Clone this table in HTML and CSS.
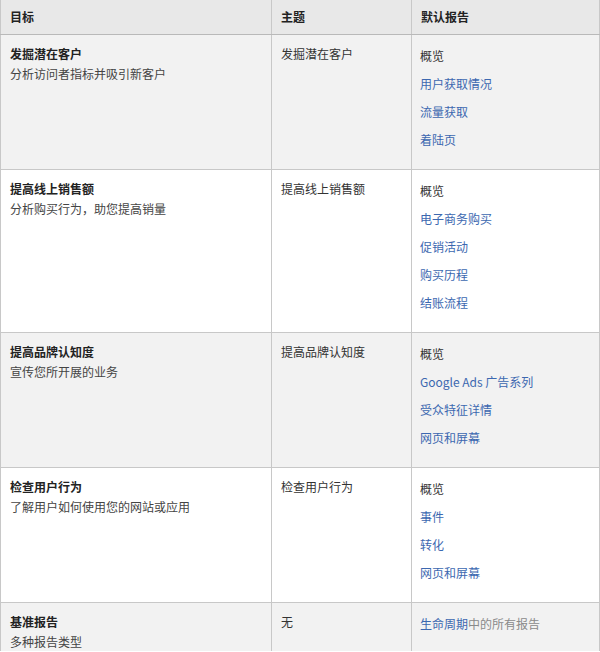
FILE: index.html
```html
<!DOCTYPE html>
<html lang="zh-CN">
<head>
<meta charset="utf-8">
<title>目标与报告</title>
<link rel="stylesheet" href="styles.css">
</head>
<body>
<table class="goals">
  <colgroup>
    <col class="c1">
    <col class="c2">
    <col class="c3">
  </colgroup>
  <thead>
    <tr class="head">
      <th>目标</th>
      <th>主题</th>
      <th>默认报告</th>
    </tr>
  </thead>
  <tbody>
    <tr class="shade">
      <td><div class="title">发掘潜在客户</div><div class="sub">分析访问者指标并吸引新客户</div></td>
      <td class="topic">发掘潜在客户</td>
      <td class="reports">
        <div class="item">概览</div>
        <div class="item link">用户获取情况</div>
        <div class="item link">流量获取</div>
        <div class="item link">着陆页</div>
      </td>
    </tr>
    <tr>
      <td><div class="title">提高线上销售额</div><div class="sub">分析购买行为，助您提高销量</div></td>
      <td class="topic">提高线上销售额</td>
      <td class="reports">
        <div class="item">概览</div>
        <div class="item link">电子商务购买</div>
        <div class="item link">促销活动</div>
        <div class="item link">购买历程</div>
        <div class="item link">结账流程</div>
      </td>
    </tr>
    <tr class="shade">
      <td><div class="title">提高品牌认知度</div><div class="sub">宣传您所开展的业务</div></td>
      <td class="topic">提高品牌认知度</td>
      <td class="reports">
        <div class="item">概览</div>
        <div class="item link">Google Ads 广告系列</div>
        <div class="item link">受众特征详情</div>
        <div class="item link">网页和屏幕</div>
      </td>
    </tr>
    <tr>
      <td><div class="title">检查用户行为</div><div class="sub">了解用户如何使用您的网站或应用</div></td>
      <td class="topic">检查用户行为</td>
      <td class="reports">
        <div class="item">概览</div>
        <div class="item link">事件</div>
        <div class="item link">转化</div>
        <div class="item link">网页和屏幕</div>
      </td>
    </tr>
    <tr class="shade last">
      <td><div class="title">基准报告</div><div class="sub">多种报告类型</div></td>
      <td class="topic">无</td>
      <td class="reports">
        <div class="item"><span class="link">生命周期</span><span class="faded">中的所有报告</span></div>
      </td>
    </tr>
  </tbody>
</table>
</body>
</html>
```

FILE: styles.css
```css
html, body {
  margin: 0;
  padding: 0;
  background: #ffffff;
}

body {
  font-family: "Noto Sans CJK SC", "Noto Sans", "Liberation Sans", sans-serif;
  font-size: 12px;
  color: #333333;
  width: 600px;
  height: 652px;
  overflow: hidden;
}

.goals {
  width: 599px;
  border-collapse: collapse;
  table-layout: fixed;
}

.c1 { width: 271px; }
.c2 { width: 140px; }
.c3 { width: 188px; }

.goals th,
.goals td {
  border: 1px solid #c8c8c8;
  vertical-align: top;
  text-align: left;
  line-height: 20px;
}

.goals th {
  background: #e8e8e8;
  font-weight: bold;
  color: #222222;
  height: 34px;
  padding: 0 9px;
  vertical-align: middle;
  border-top: none;
  border-bottom: 1px solid #b9b9b9;
}

.goals td {
  padding: 9px 9px 0 9px;
}

.shade td {
  background: #f2f2f2;
}

.title {
  font-weight: bold;
  color: #222222;
}

.sub {
  color: #444444;
  line-height: 19px;
}

.topic {
  color: #333333;
}

.goals td.reports {
  padding: 11px 9px 11px 8px;
}

.item {
  margin-bottom: 8px;
  color: #333333;
}

.link {
  color: #3c68b0;
}

.faded {
  color: #8a8a8a;
}

.goals .last td {
  padding-bottom: 0;
  border-bottom: none;
}

.goals .last td.reports {
  padding-bottom: 0;
}
```
